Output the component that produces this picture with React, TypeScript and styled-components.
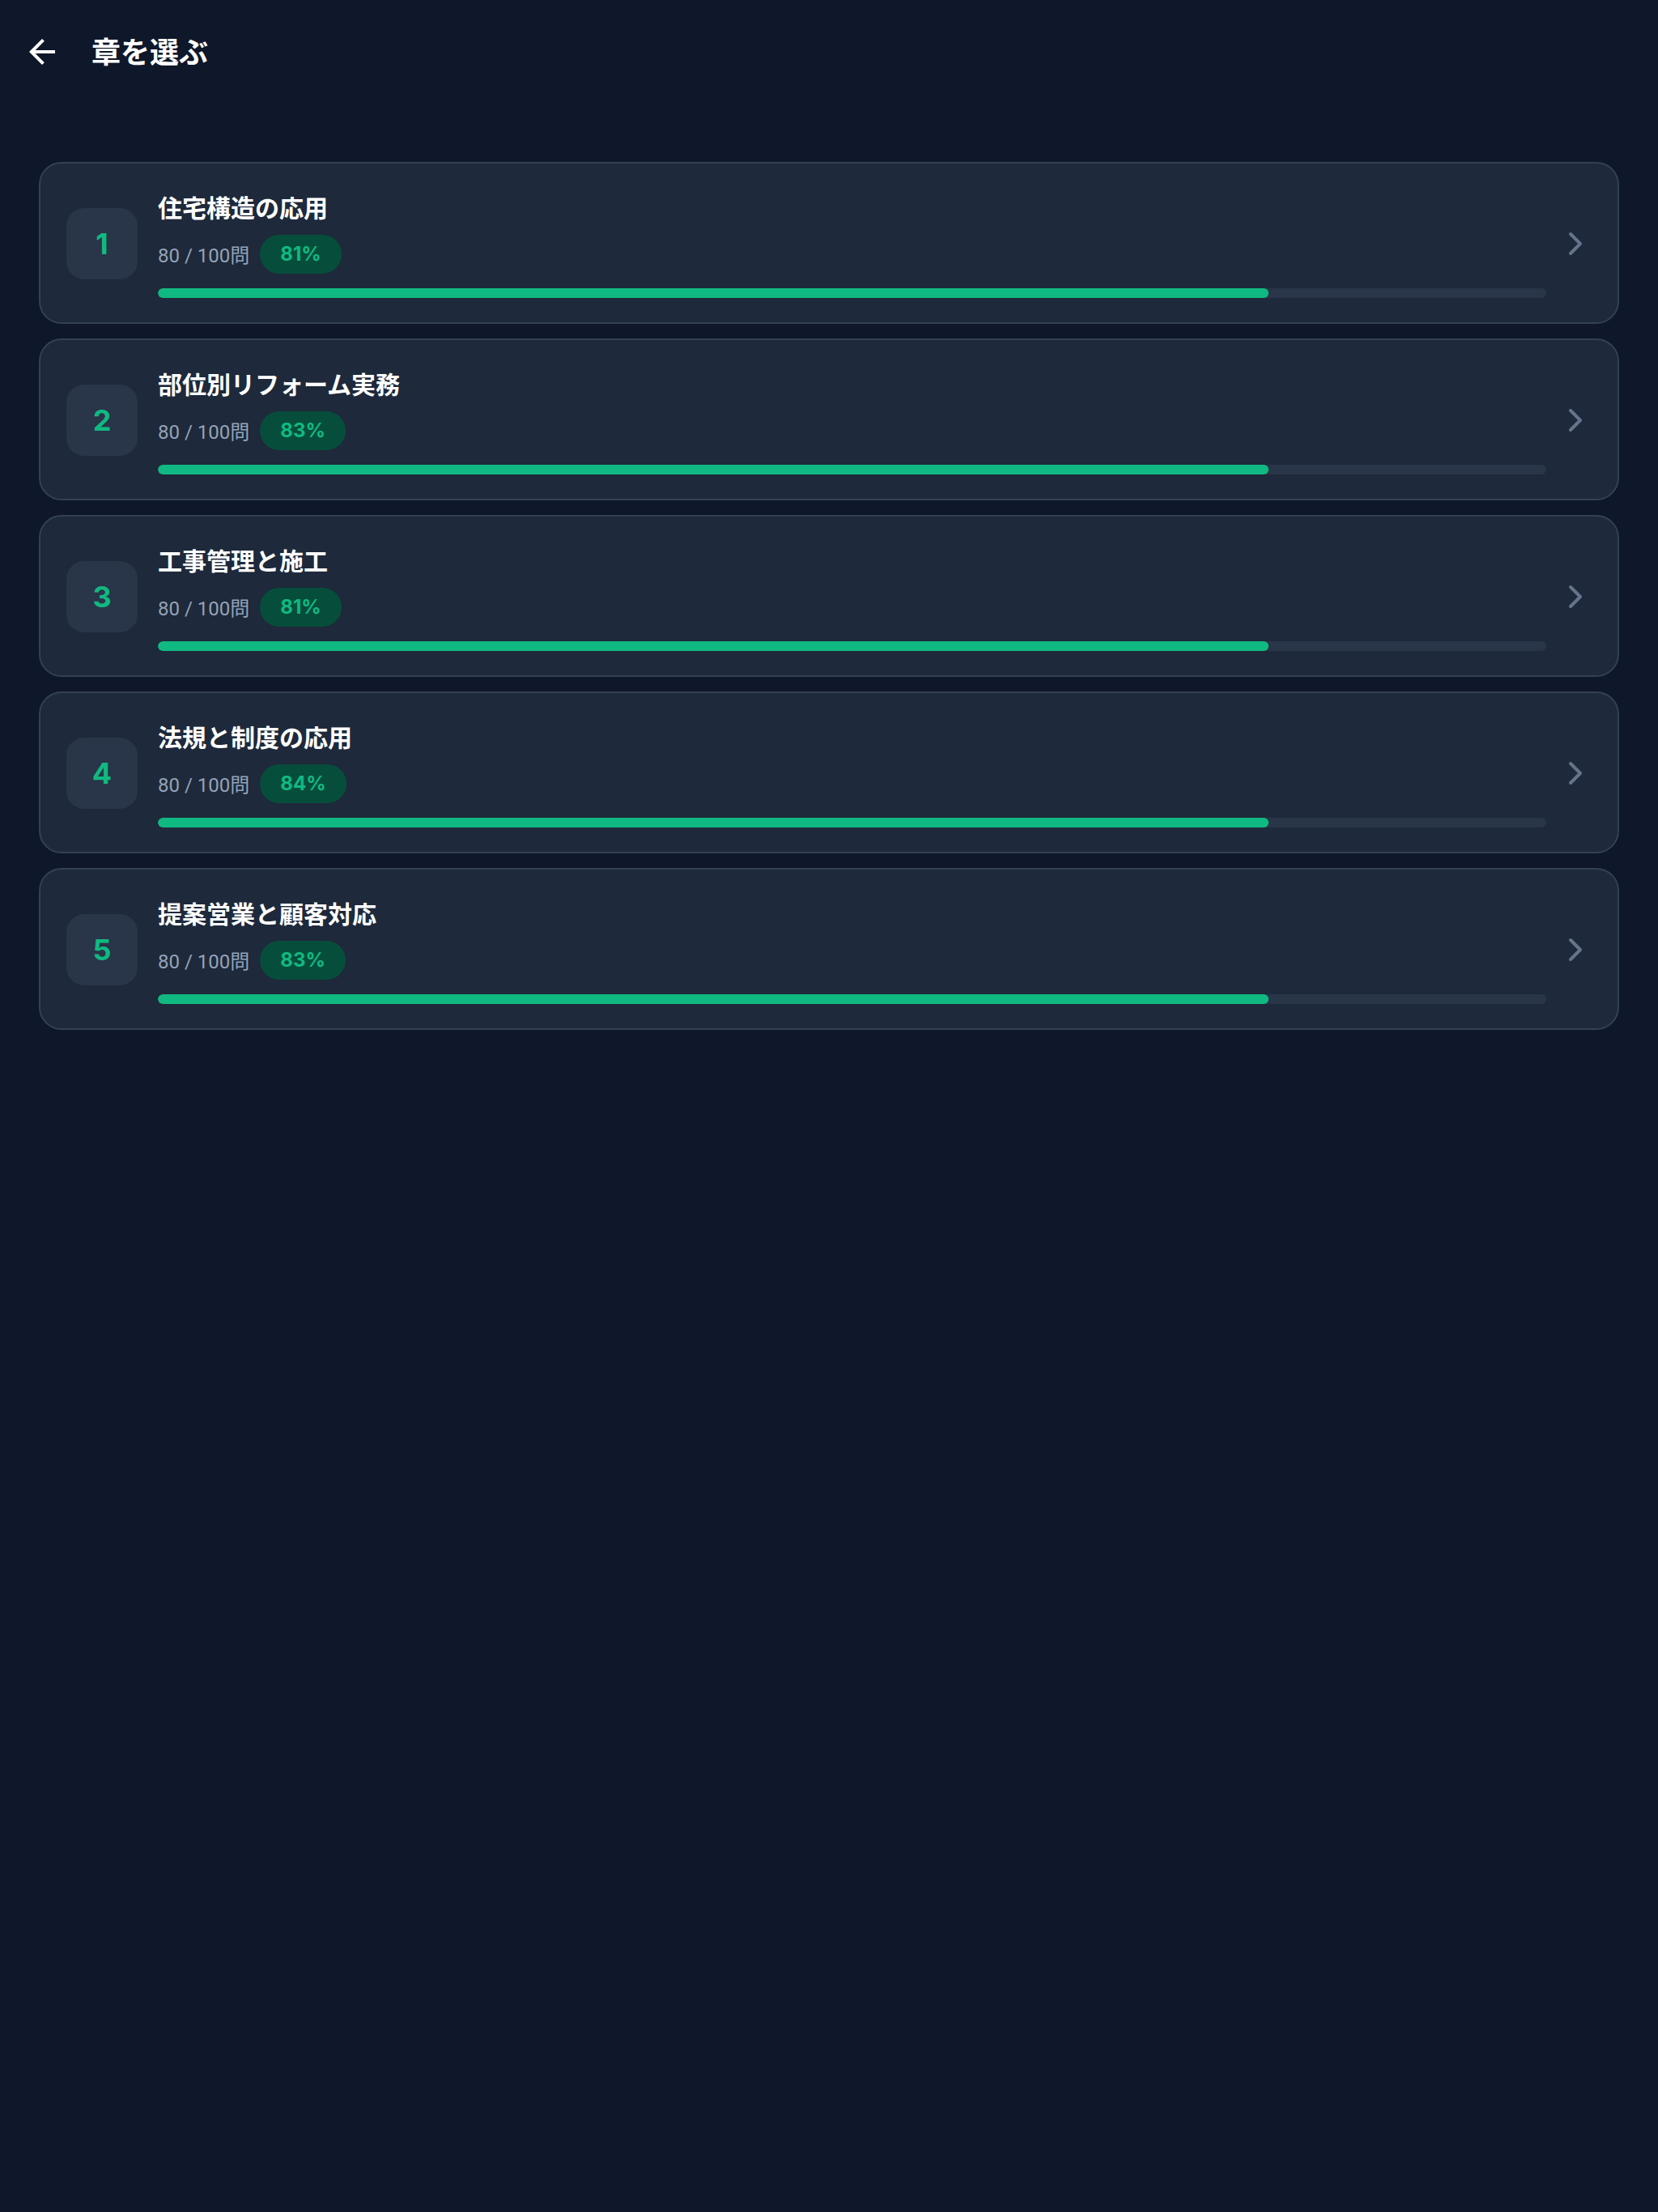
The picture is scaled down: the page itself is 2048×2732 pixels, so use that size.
import styled, {createGlobalStyle} from "styled-components";
import {MdArrowBack} from "react-icons/md";
import {ChevronRight} from "lucide-react";

const GlobalStyle = createGlobalStyle`
    html, body {
        margin: 0;
        padding: 0;
        background-color: #0f172a;
    }
    body {
        font-family: Roboto, "Noto Sans CJK JP", sans-serif;
        color: #f8fafc;
    }
`

const Page = styled.div`
    min-height: 2732px;
    background-color: #0f172a;
`

const Header = styled.header`
    display: flex;
    align-items: center;
    height: 128px;
    padding: 0 28px;
    gap: 37px;
`

const BackButton = styled.button`
    width: 48px;
    height: 48px;
    padding: 0;
    margin: 0;
    border: none;
    background-color: transparent;
    color: #ffffff;
    display: flex;
    align-items: center;
    justify-content: center;
    cursor: pointer;
`

const HeaderTitle = styled.h1`
    margin: 0 0 4px;
    font-family: "Noto Sans CJK JP", sans-serif;
    font-size: 36px;
    font-weight: 700;
    color: #ffffff;
    line-height: 48px;
`

const List = styled.main`
    display: flex;
    flex-direction: column;
    gap: 18px;
    padding: 72px 48px;
`

const Card = styled.div`
    display: flex;
    align-items: center;
    box-sizing: border-box;
    height: 200px;
    padding: 2px 28px 0 32px;
    background-color: #1e293b;
    border: 2px solid #334155;
    border-radius: 28px;
    cursor: pointer;
`

const NumberBox = styled.div`
    flex: none;
    width: 88px;
    height: 88px;
    margin-right: 25px;
    border-radius: 22px;
    background-color: #293548;
    display: flex;
    align-items: center;
    justify-content: center;
    color: #10b981;
    font-family: Inter, sans-serif;
    font-size: 36px;
    font-weight: 700;
`

const Content = styled.div`
    flex: 1;
    min-width: 0;
`

const Title = styled.div`
    font-family: "Noto Sans CJK JP", sans-serif;
    font-size: 30px;
    font-weight: 700;
    line-height: 40px;
    color: #ffffff;
`

const StatsRow = styled.div`
    display: flex;
    align-items: center;
    gap: 13px;
    margin-top: 15px;
`

const Count = styled.span`
    font-family: Roboto, "Noto Sans CJK JP", sans-serif;
    font-size: 24px;
    color: #94a3b8;
`

const Badge = styled.span`
    display: inline-flex;
    align-items: center;
    height: 48px;
    padding: 0 25px;
    border-radius: 24px;
    background-color: #064e3b;
    color: #10b981;
    font-family: Inter, sans-serif;
    font-size: 24px;
    font-weight: 700;
`

const Track = styled.div`
    height: 12px;
    margin-top: 18px;
    border-radius: 6px;
    background-color: #293548;
    overflow: hidden;
`

const Fill = styled.div`
    height: 100%;
    border-radius: 6px;
    background-color: #10b981;
`

const Chevron = styled(ChevronRight)`
    flex: none;
    margin-left: 12px;
    color: #64748b;
`

interface IChapter {
    no: number
    title: string
    done: number
    total: number
    rate: number
}

const chapters: IChapter[] = [
    {no: 1, title: "住宅構造の応用", done: 80, total: 100, rate: 81},
    {no: 2, title: "部位別リフォーム実務", done: 80, total: 100, rate: 83},
    {no: 3, title: "工事管理と施工", done: 80, total: 100, rate: 81},
    {no: 4, title: "法規と制度の応用", done: 80, total: 100, rate: 84},
    {no: 5, title: "提案営業と顧客対応", done: 80, total: 100, rate: 83},
]

export default function App() {
    return (
        <>
            <GlobalStyle/>
            <Page>
                <Header>
                    <BackButton aria-label="戻る">
                        <MdArrowBack size={48}/>
                    </BackButton>
                    <HeaderTitle>章を選ぶ</HeaderTitle>
                </Header>
                <List>
                    {chapters.map(ch => (
                        <Card key={ch.no}>
                            <NumberBox>{ch.no}</NumberBox>
                            <Content>
                                <Title>{ch.title}</Title>
                                <StatsRow>
                                    <Count>{ch.done} / {ch.total}問</Count>
                                    <Badge>{ch.rate}%</Badge>
                                </StatsRow>
                                <Track>
                                    <Fill style={{width: `${ch.done / ch.total * 100}%`}}/>
                                </Track>
                            </Content>
                            <Chevron size={48} strokeWidth={2}/>
                        </Card>
                    ))}
                </List>
            </Page>
        </>
    );
}
